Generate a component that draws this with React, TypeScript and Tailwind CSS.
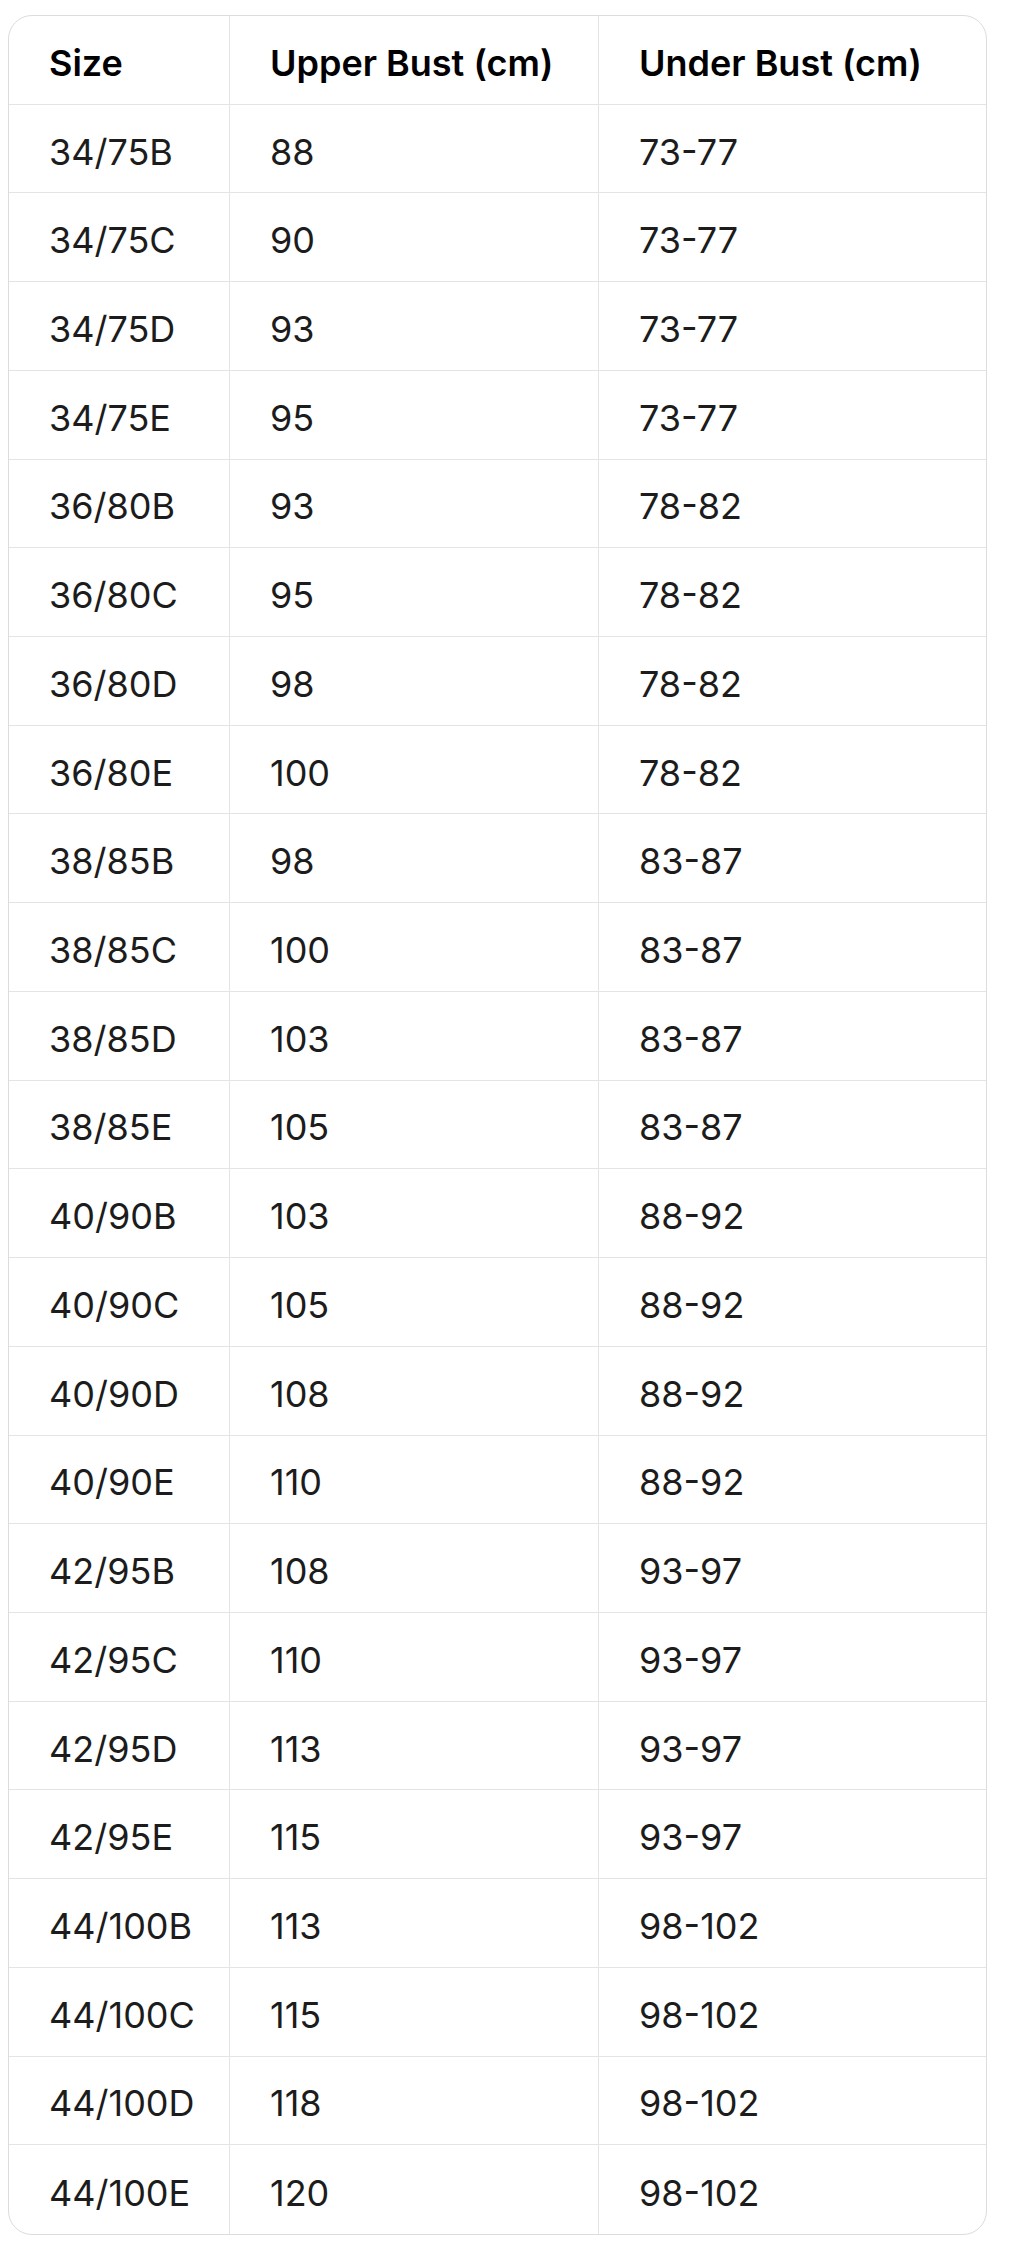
const rows: [string, string, string][] = [
  ['34/75B', '88', '73-77'],
  ['34/75C', '90', '73-77'],
  ['34/75D', '93', '73-77'],
  ['34/75E', '95', '73-77'],
  ['36/80B', '93', '78-82'],
  ['36/80C', '95', '78-82'],
  ['36/80D', '98', '78-82'],
  ['36/80E', '100', '78-82'],
  ['38/85B', '98', '83-87'],
  ['38/85C', '100', '83-87'],
  ['38/85D', '103', '83-87'],
  ['38/85E', '105', '83-87'],
  ['40/90B', '103', '88-92'],
  ['40/90C', '105', '88-92'],
  ['40/90D', '108', '88-92'],
  ['40/90E', '110', '88-92'],
  ['42/95B', '108', '93-97'],
  ['42/95C', '110', '93-97'],
  ['42/95D', '113', '93-97'],
  ['42/95E', '115', '93-97'],
  ['44/100B', '113', '98-102'],
  ['44/100C', '115', '98-102'],
  ['44/100D', '118', '98-102'],
  ['44/100E', '120', '98-102'],
];

const Row = ({ cells, head, last }: { cells: [string, string, string]; head?: boolean; last?: boolean }) => (
  <div
    className={`grid grid-cols-[220px_369px_1fr] h-[88.72px] ${last ? '' : 'border-b border-[#e4e4e4]'} ${
      head ? 'font-semibold text-black' : 'font-normal text-[#1c1c1c]'
    }`}
  >
    <div className="flex items-center pl-[40px] pt-1.5">{cells[0]}</div>
    <div className="flex items-center pl-[40px] pt-1.5 border-l border-[#e4e4e4]">{cells[1]}</div>
    <div className="flex items-center pl-[40px] pt-1.5 border-l border-[#e4e4e4]">{cells[2]}</div>
  </div>
);

const App = () => {
  return (
    <div className="min-h-screen bg-white pt-[15px] pl-[8px] pr-[25px]" style={{ fontFamily: 'Inter, "Noto Sans", sans-serif' }}>
      <div className="w-[979px] rounded-[24px] border border-[#dcdcdc] overflow-hidden text-[36px] leading-none">
        <Row cells={['Size', 'Upper Bust (cm)', 'Under Bust (cm)']} head />
        {rows.map((r, i) => (
          <Row key={r[0]} cells={r} last={i === rows.length - 1} />
        ))}
      </div>
    </div>
  );
};

export default App;
